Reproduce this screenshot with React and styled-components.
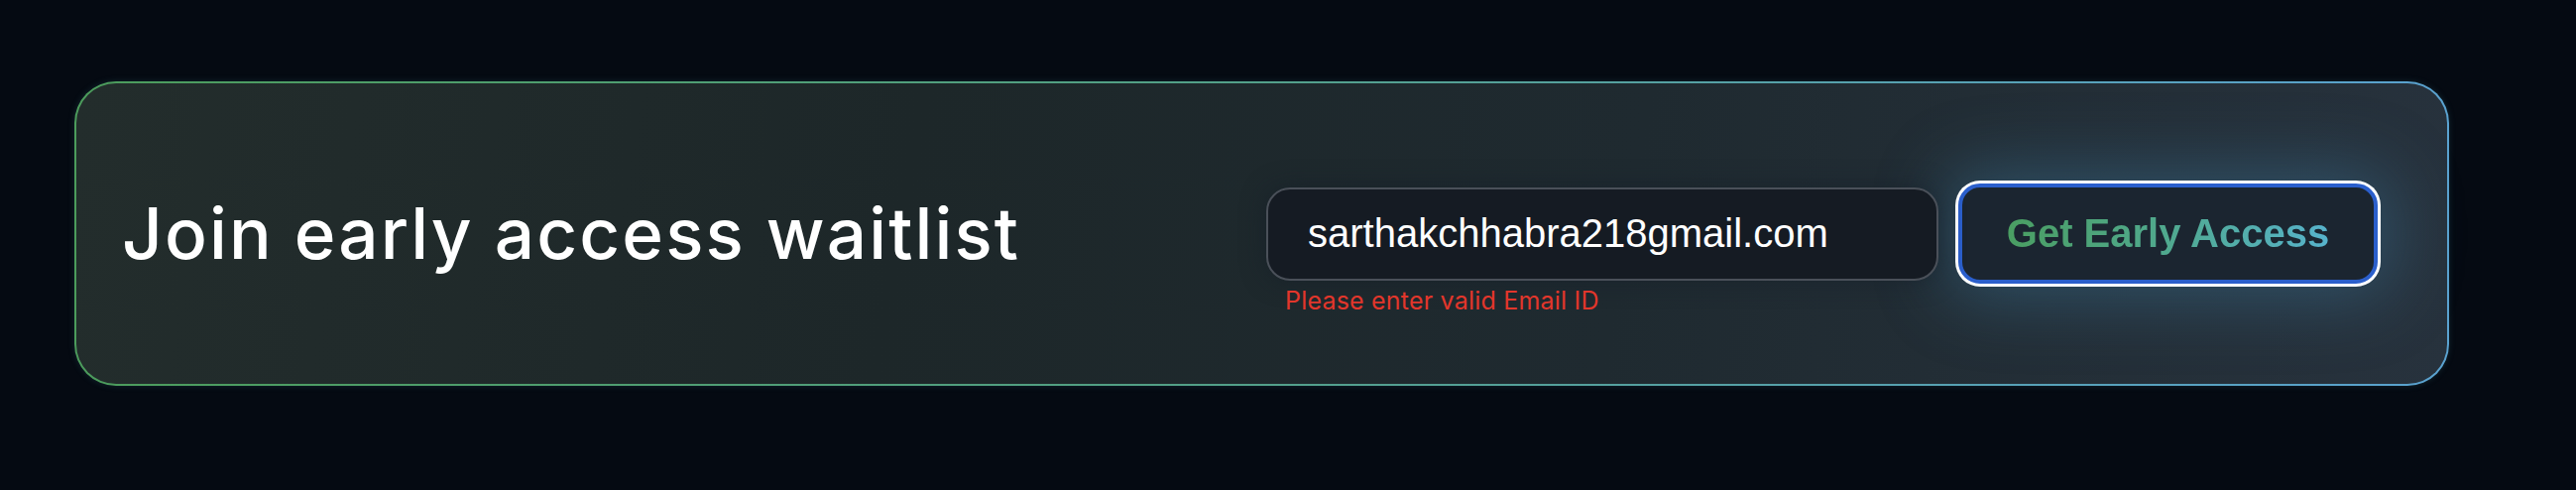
import React from "react";
import styled, { createGlobalStyle } from "styled-components";

const Global = createGlobalStyle`
  html, body { margin: 0; padding: 0; background: #050a12; }
  body { font-family: "Liberation Sans", Arial, sans-serif; }
  * { box-sizing: border-box; }
`;

const Page = styled.main`
  width: 2598px;
  height: 494px;
  background: #050a12;
  padding: 82px 0 0 75px;
`;

const Card = styled.section`
  width: 2395px;
  height: 307px;
  border-radius: 42px;
  border: 2px solid transparent;
  background:
    linear-gradient(100deg, #232d2c 0%, #1d2729 35%, #1f2a30 65%, #27323d 100%) padding-box,
    linear-gradient(90deg, #4c9c5c 0%, #53a08a 50%, #5aa2d0 100%) border-box;
  box-shadow: 0 0 6px rgba(60, 120, 130, 0.25);
  display: flex;
  align-items: center;
  justify-content: space-between;
  padding: 0 70px 0 46px;
`;

const Heading = styled.h2`
  margin: 0;
  font-family: "Inter", "Open Sans", sans-serif;
  font-weight: 500;
  font-size: 71px;
  letter-spacing: 2.1px;
  color: #ffffff;
  line-height: 1;
`;

const Form = styled.form`
  display: flex;
  align-items: center;
  gap: 20px;
  margin: 0;
`;

const Field = styled.div`
  position: relative;
`;

const Input = styled.input`
  display: block;
  width: 678px;
  height: 94px;
  border-radius: 24px;
  border: 2px solid #4a5059;
  background: #151b23;
  box-shadow: 0 0 24px rgba(20, 30, 40, 0.6);
  color: #ffffff;
  font-family: "Liberation Sans", Arial, sans-serif;
  font-size: 40px;
  padding: 0 40px;
  outline: none;
`;

const ErrorText = styled.p`
  position: absolute;
  left: 19px;
  top: 100%;
  margin: 5px 0 0;
  font-family: "Inter", "Open Sans", sans-serif;
  font-size: 25px;
  letter-spacing: 0.2px;
  color: #e2362b;
  white-space: nowrap;
`;

const Button = styled.button`
  width: 423px;
  height: 101px;
  border-radius: 22px;
  border: 4px solid #2b5fcc;
  background: #1b2530;
  box-shadow: 0 0 0 3px #ffffff, 0 0 70px 14px rgba(70, 140, 185, 0.36);
  cursor: pointer;
  padding: 0;
  display: flex;
  align-items: center;
  justify-content: center;
`;

const ButtonLabel = styled.span`
  font-family: "Liberation Sans", Arial, sans-serif;
  font-weight: 700;
  font-size: 40px;
  background: linear-gradient(90deg, #4a9e62 0%, #50a98f 50%, #57b3cc 100%);
  -webkit-background-clip: text;
  background-clip: text;
  color: transparent;
`;

export default function App() {
  return (
    <>
      <Global />
      <Page>
        <Card>
          <Heading>Join early access waitlist</Heading>
          <Form onSubmit={(e) => e.preventDefault()}>
            <Field>
              <Input type="text" defaultValue="sarthakchhabra218gmail.com" />
              <ErrorText>Please enter valid Email ID</ErrorText>
            </Field>
            <Button type="submit">
              <ButtonLabel>Get Early Access</ButtonLabel>
            </Button>
          </Form>
        </Card>
      </Page>
    </>
  );
}
